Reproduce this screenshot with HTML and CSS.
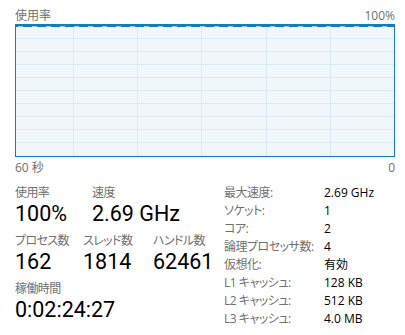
FILE: index.html
```html
<!DOCTYPE html>
<html lang="ja">
<head>
  <meta charset="UTF-8">
  <title>CPU</title>
  <link rel="stylesheet" href="styles.css">
</head>
<body>
  <div class="graph-head">
    <span>使用率</span>
    <span>100%</span>
  </div>
  <div class="graph">
    <svg width="378" height="131" viewBox="0 0 378 131">
      <rect x="0" y="0" width="378" height="131" fill="#f1f6fa"/>
      <g stroke="#d9eaf4" stroke-width="1">
        <line x1="57.5" y1="0" x2="57.5" y2="131"/>
        <line x1="121.5" y1="0" x2="121.5" y2="131"/>
        <line x1="185.5" y1="0" x2="185.5" y2="131"/>
        <line x1="250.5" y1="0" x2="250.5" y2="131"/>
        <line x1="314.5" y1="0" x2="314.5" y2="131"/>
        <line x1="0" y1="13.5" x2="378" y2="13.5"/>
        <line x1="0" y1="26.5" x2="378" y2="26.5"/>
        <line x1="0" y1="39.5" x2="378" y2="39.5"/>
        <line x1="0" y1="52.5" x2="378" y2="52.5"/>
        <line x1="0" y1="65.5" x2="378" y2="65.5"/>
        <line x1="0" y1="78.5" x2="378" y2="78.5"/>
        <line x1="0" y1="91.5" x2="378" y2="91.5"/>
        <line x1="0" y1="104.5" x2="378" y2="104.5"/>
        <line x1="0" y1="117.5" x2="378" y2="117.5"/>
      </g>
      <line x1="0" y1="1" x2="378" y2="1" stroke="#117dbb" stroke-width="2"/>
      <line x1="2" y1="1.5" x2="378" y2="1.5" stroke="#ffffff" stroke-width="1" stroke-opacity="0.6" stroke-dasharray="5 9"/>
    </svg>
  </div>
  <div class="graph-foot">
    <span>60 秒</span>
    <span>0</span>
  </div>

  <div class="details">
    <div class="stats">
      <div class="stat-row">
        <div class="stat w77">
          <div class="label">使用率</div>
          <div class="value">100%</div>
        </div>
        <div class="stat">
          <div class="label">速度</div>
          <div class="value">2.69 GHz</div>
        </div>
      </div>
      <div class="stat-row">
        <div class="stat w68">
          <div class="label">プロセス数</div>
          <div class="value">162</div>
        </div>
        <div class="stat w70">
          <div class="label">スレッド数</div>
          <div class="value">1814</div>
        </div>
        <div class="stat">
          <div class="label">ハンドル数</div>
          <div class="value">62461</div>
        </div>
      </div>
      <div class="stat-row">
        <div class="stat">
          <div class="label">稼働時間</div>
          <div class="value">0:02:24:27</div>
        </div>
      </div>
    </div>

    <div class="info">
      <span class="key">最大速度:</span><span>2.69 GHz</span>
      <span class="key">ソケット:</span><span>1</span>
      <span class="key">コア:</span><span>2</span>
      <span class="key">論理プロセッサ数:</span><span>4</span>
      <span class="key">仮想化:</span><span>有効</span>
      <span class="key">L1 キャッシュ:</span><span>128 KB</span>
      <span class="key">L2 キャッシュ:</span><span>512 KB</span>
      <span class="key">L3 キャッシュ:</span><span>4.0 MB</span>
    </div>
  </div>
</body>
</html>
```

FILE: styles.css
```css
body { margin: 0; padding: 7px 10px 0 15px; background: #fff; font-family: "Open Sans", "Noto Sans CJK JP", sans-serif; font-feature-settings: "palt"; color: #000; }
.graph-head, .graph-foot { display: flex; justify-content: space-between; width: 380px; font-size: 12px; line-height: 17px; color: #707070; }
.graph { width: 378px; height: 131px; border: 1px solid #117dbb; }
.graph svg { display: block; }
.graph-foot { margin-top: 2px; }

.details { display: flex; margin-top: 8px; }
.stats { width: 209px; }
.stat-row { display: flex; margin-bottom: 6px; }
.w77 { width: 77px; }
.w68 { width: 68px; }
.w70 { width: 70px; }
.label { font-size: 12px; line-height: 17px; color: #707070; letter-spacing: -0.6px; }
.value { font-family: Roboto, sans-serif; font-size: 21.5px; line-height: 25px; }

.info { display: grid; grid-template-columns: 100px auto; font-size: 12px; line-height: 18px; }
.key { color: #707070; letter-spacing: -0.5px; }
```
